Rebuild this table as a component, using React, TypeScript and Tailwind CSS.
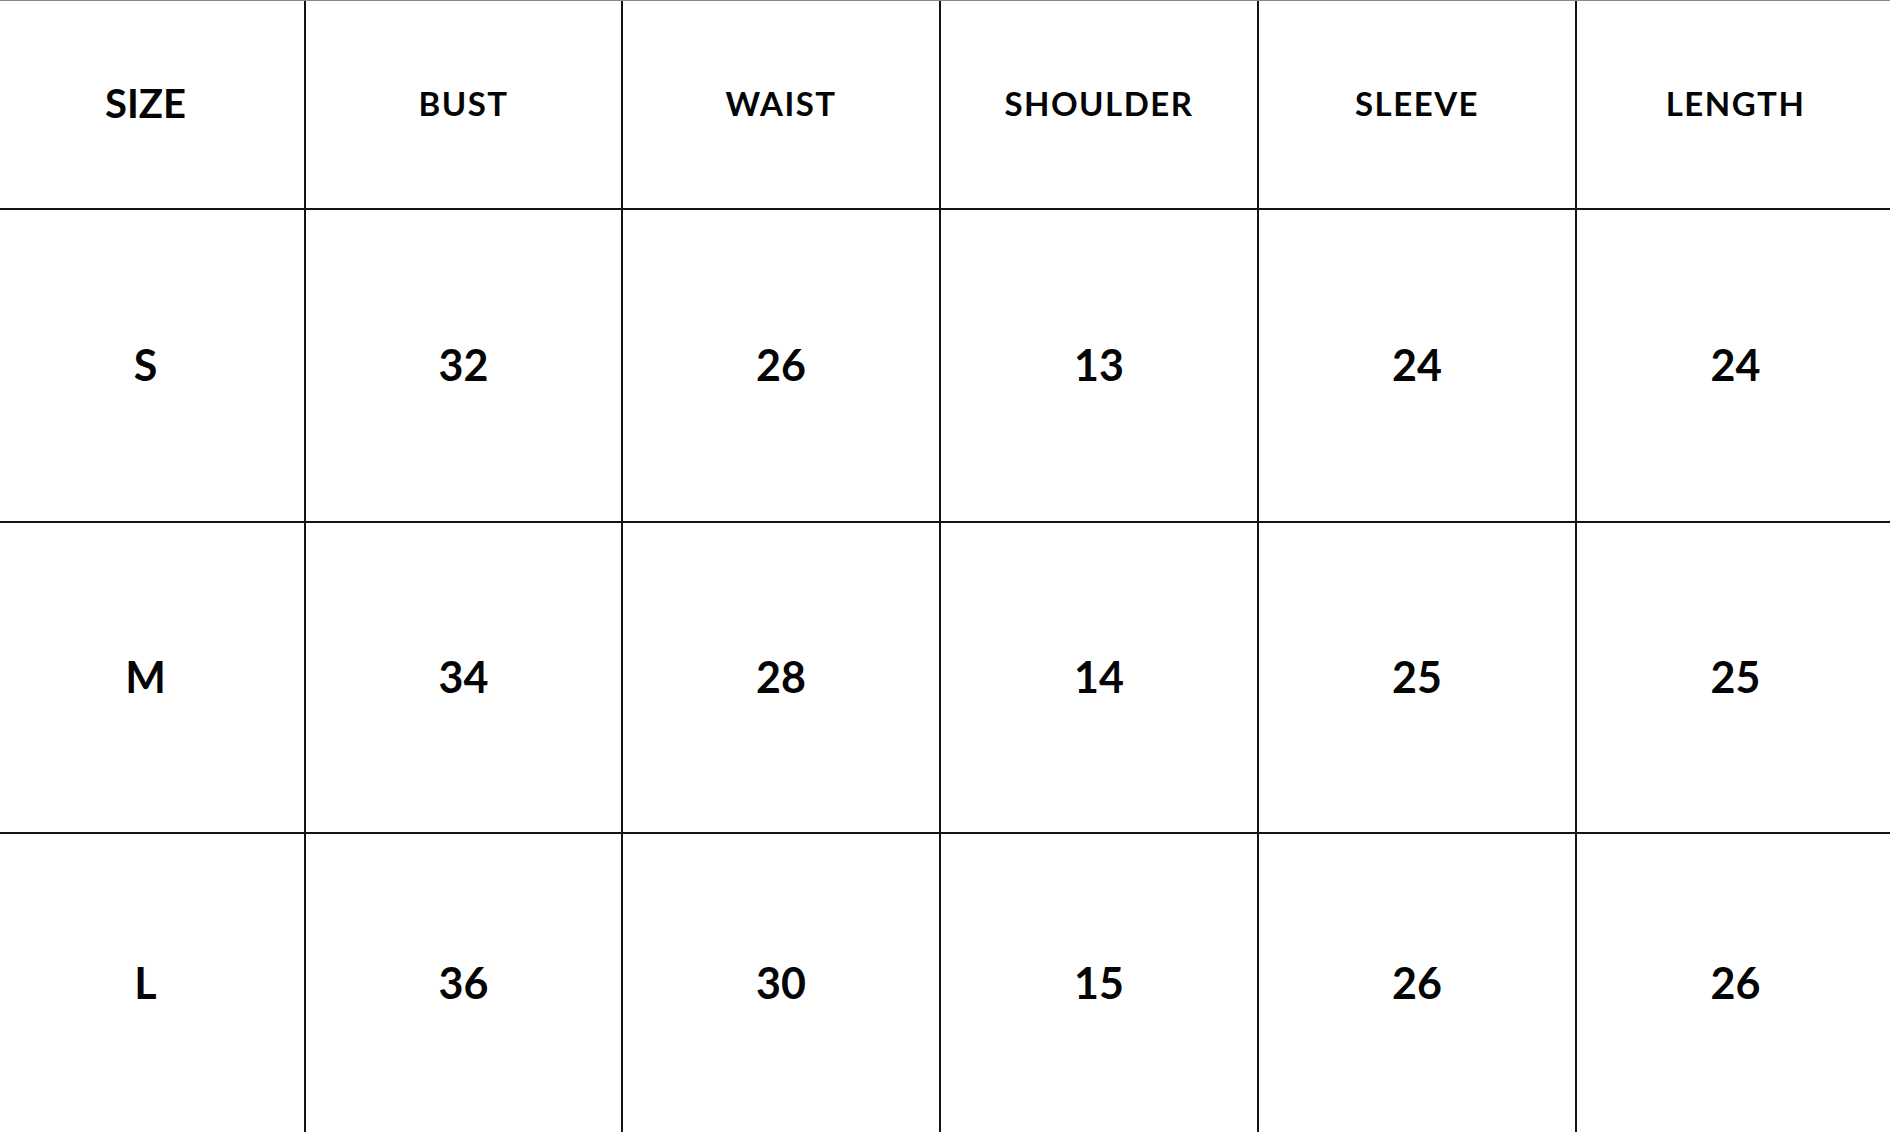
import React from 'react';

const headers = ['BUST', 'WAIST', 'SHOULDER', 'SLEEVE', 'LENGTH'];

const rows: [string, number[]][] = [
  ['S', [32, 26, 13, 24, 24]],
  ['M', [34, 28, 14, 25, 25]],
  ['L', [36, 30, 15, 26, 26]],
];

const cell = 'flex items-center justify-center bg-white pb-[3px] text-[#050505]';

export default function App() {
  return (
    <div className="h-[1132px] w-[1890px] overflow-hidden bg-white font-['Lato','Liberation_Sans',sans-serif]">
      <div className="-ml-[13px] grid w-[1907px] grid-cols-[317px_315px_316px_316px_316px_317px] grid-rows-[207px_311px_309px_300px] gap-[2px] border-t border-[#8a8a8a] bg-[#141414]">
        <div className={`${cell} text-[40px] font-bold leading-none`}>SIZE</div>
        {headers.map(h => (
          <div key={h} className={`${cell} text-[33px] font-bold leading-none tracking-[1.5px]`}>
            {h}
          </div>
        ))}
        {rows.map(([size, values]) => (
          <React.Fragment key={size}>
            <div className={`${cell} text-[43px] font-bold leading-none`}>{size}</div>
            {values.map((v, i) => (
              <div key={i} className={`${cell} text-[43px] font-bold leading-none`}>
                {v}
              </div>
            ))}
          </React.Fragment>
        ))}
      </div>
    </div>
  );
}
